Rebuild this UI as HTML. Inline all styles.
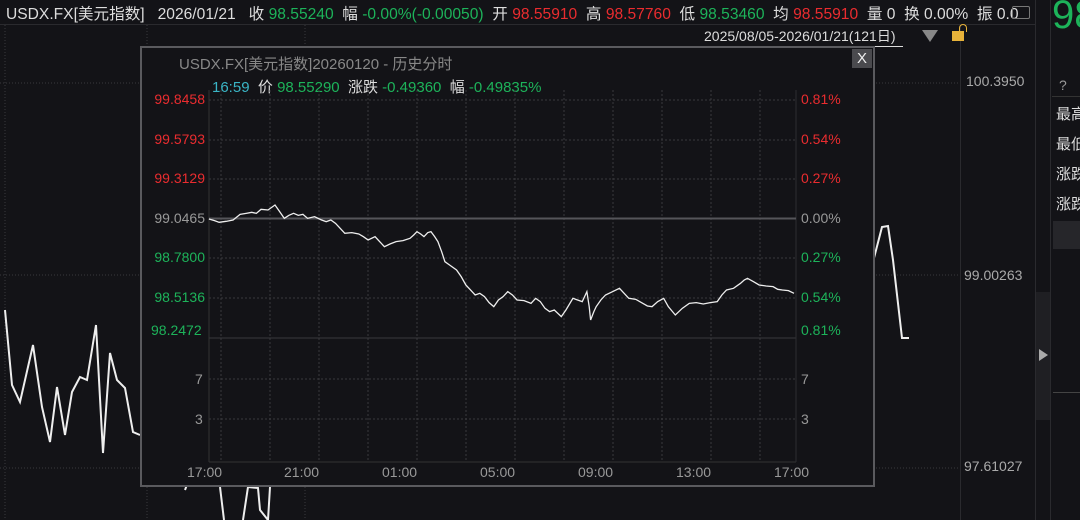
<!DOCTYPE html><html><head><meta charset="utf-8"><style>
body{margin:0;width:1080px;height:520px;background:#131317;overflow:hidden;position:relative;font-family:"Liberation Sans","Noto Sans CJK SC",sans-serif;color:#ccc}
.a{position:absolute;white-space:nowrap}
.r{color:#ea2c2f}.g{color:#1db35a}.w{color:#ddd}.gy{color:#999}
.t{font-size:15.6px;top:2px;width:1028px;overflow:hidden}
.ax{font-size:14px;color:#aaa}
</style></head><body>
<div class="a" style="left:0;top:0;width:1035px;height:24px;border-bottom:1px solid #2a2a2e"></div>
<div class="a t w" style="left:6px">USDX.FX[美元指数] &nbsp; 2026/01/21 &nbsp; 收 <span class="g">98.55240</span> &nbsp;幅 <span class="g">-0.00%(-0.00050)</span> &nbsp;开 <span class="r">98.55910</span> &nbsp;高 <span class="r">98.57760</span> &nbsp;低 <span class="g">98.53460</span> &nbsp;均 <span class="r">98.55910</span> &nbsp;量 0 &nbsp;换 0.00% &nbsp;振 0.0</div>
<div class="a" style="left:1012px;top:6px;width:16px;height:11px;border:1.5px solid #777;border-radius:2px"></div>
<div class="a" style="left:1035px;top:0;width:1px;height:520px;background:#2a2a2e"></div>
<div class="a" style="left:1050px;top:0;width:1px;height:520px;background:#2a2a2e"></div>
<div class="a g" style="left:1052px;top:-7px;font-size:40px">98</div>
<div class="a gy" style="left:1059px;top:77px;font-size:14px">?</div>
<div class="a" style="left:1052px;top:96px;width:28px;height:1px;background:#333"></div>
<div class="a w" style="left:1056px;top:100px;font-size:15px;line-height:30px">最高<br>最低<br>涨跌<br>涨跌</div>
<div class="a" style="left:1053px;top:221px;width:27px;height:28px;background:#26262a"></div>
<div class="a" style="left:1053px;top:392px;width:27px;height:1px;background:#444"></div>
<div class="a" style="left:1036px;top:292px;width:14px;height:128px;background:#1f1f23"></div>
<div class="a" style="left:1039px;top:349px;width:0;height:0;border-left:9px solid #aaa;border-top:6px solid transparent;border-bottom:6px solid transparent"></div>
<div class="a" style="left:960px;top:25px;width:1px;height:495px;background:#2a2a2e"></div>
<div class="a w" style="left:704px;top:26px;font-size:14px;border-bottom:1px solid #ddd;padding-right:8px">2025/08/05-2026/01/21(121日)</div>
<div class="a" style="left:922px;top:30px;border-top:12px solid #888;border-left:8px solid transparent;border-right:8px solid transparent"></div>
<div class="a" style="left:952px;top:31px;width:12px;height:10px;background:#e8b33a"></div>
<div class="a" style="left:959px;top:24px;width:6px;height:7px;border:1.5px solid #e8b33a;border-bottom:none;border-radius:4px 4px 0 0"></div>
<div class="a ax" style="left:966px;top:73px">100.3950</div>
<div class="a ax" style="left:964px;top:267px">99.00263</div>
<div class="a ax" style="left:964px;top:458px">97.61027</div>
<svg class="a" style="left:0;top:0" width="1080" height="520">
<g stroke="#3a3a3e" stroke-dasharray="1,2">
<line x1="0" y1="83" x2="960" y2="83"/><line x1="0" y1="275" x2="960" y2="275"/><line x1="0" y1="468" x2="960" y2="468"/>
<line x1="5" y1="25" x2="5" y2="520"/><line x1="147" y1="25" x2="147" y2="520"/><line x1="305" y1="25" x2="305" y2="520"/>
</g>
<polyline fill="none" stroke="#eee" stroke-width="2" points="5,310 12,385 20,402 33,345 42,407 50,442 57,387 65,435 72,392 80,377 87,380 96,325 103,453 110,353 117,380 125,388 133,432 140,435"/>
<polyline fill="none" stroke="#eee" stroke-width="2" points="185,490 188,482"/>
<polyline fill="none" stroke="#eee" stroke-width="2" points="220,487 224,520"/>
<polyline fill="none" stroke="#eee" stroke-width="2" points="243,520 248,487 258,488 260,510 268,520 270,487"/>
<polyline fill="none" stroke="#eee" stroke-width="2" points="874,258 882,227 888,226 893,260 902,338 909,338"/>
</svg>
<div class="a" style="left:140px;top:46px;width:731px;height:437px;border:2px solid #5a5a5e;background:#131317"></div>
<div class="a" style="left:852px;top:49px;width:20px;height:19px;background:#4a4a4e;color:#eee;font-size:15px;text-align:center;line-height:19px">X</div>
<div class="a" style="left:179px;top:53px;font-size:15px;color:#888">USDX.FX[美元指数]20260120 - 历史分时</div>
<div class="a w" style="left:212px;top:76px;font-size:15px"><span style="color:#3ab5c6">16:59</span> &nbsp;价 <span class="g">98.55290</span> &nbsp;涨跌 <span class="g">-0.49360</span> &nbsp;幅 <span class="g">-0.49835%</span></div>
<svg class="a" style="left:0;top:0" width="1080" height="520">
<g stroke="#3a3a3e" stroke-dasharray="2,2">
<line x1="209" y1="100" x2="796" y2="100"/><line x1="209" y1="140" x2="796" y2="140"/><line x1="209" y1="179" x2="796" y2="179"/><line x1="209" y1="258" x2="796" y2="258"/><line x1="209" y1="298" x2="796" y2="298"/><line x1="209" y1="379" x2="796" y2="379"/><line x1="209" y1="419" x2="796" y2="419"/>
<line x1="221" y1="90" x2="221" y2="462"/><line x1="270" y1="90" x2="270" y2="462"/><line x1="319" y1="90" x2="319" y2="462"/><line x1="368" y1="90" x2="368" y2="462"/><line x1="417" y1="90" x2="417" y2="462"/><line x1="466" y1="90" x2="466" y2="462"/><line x1="515" y1="90" x2="515" y2="462"/><line x1="564" y1="90" x2="564" y2="462"/><line x1="613" y1="90" x2="613" y2="462"/><line x1="662" y1="90" x2="662" y2="462"/><line x1="711" y1="90" x2="711" y2="462"/><line x1="760" y1="90" x2="760" y2="462"/>
</g>
<line x1="209" y1="338" x2="796" y2="338" stroke="#3a3a3e"/>
<line x1="209" y1="90" x2="209" y2="462" stroke="#333"/>
<line x1="209" y1="462" x2="796" y2="462" stroke="#333"/>
<line x1="796" y1="90" x2="796" y2="462" stroke="#2c2c30"/>
<line x1="209" y1="218.5" x2="796" y2="218.5" stroke="#55555a" stroke-width="2"/>
<g transform="translate(140,180) scale(0.4655,0.3333)"><polyline fill="none" stroke="#eee" stroke-width="1.3" vector-effect="non-scaling-stroke" points="148,117 160,122 170,127 185,124 200,120 215,103 228,100 240,97 250,100 260,88 275,90 290,75 300,95 310,115 320,106 330,100 340,106 350,103 360,115 375,110 390,120 400,125 410,120 420,130 430,145 440,160 455,158 470,162 480,170 490,180 505,170 515,185 525,200 537,192 550,185 565,182 580,175 588,165 595,155 603,162 610,170 618,158 625,155 633,170 640,185 648,215 655,245 665,255 680,270 690,290 700,315 710,330 720,345 730,340 740,350 750,368 760,380 770,360 780,350 790,335 800,345 810,360 825,362 840,370 850,355 860,365 870,385 880,395 890,390 905,410 915,390 930,355 940,360 950,365 960,335 965,380 968,420 975,395 980,380 990,360 1000,345 1015,335 1030,325 1040,340 1050,355 1065,358 1080,370 1090,378 1100,380 1112,365 1125,355 1135,380 1150,405 1165,385 1180,370 1195,368 1210,372 1225,368 1240,365 1250,345 1260,330 1275,325 1290,310 1298,300 1305,295 1318,305 1330,315 1345,318 1360,320 1370,328 1380,330 1393,332 1405,340"/></g>
</svg>
<div class="a" style="font-size:14px;left:151px;top:80px;line-height:39.5px;text-align:right;width:54px"><span class="r">99.8458</span><br><span class="r">99.5793</span><br><span class="r">99.3129</span><br><span class="gy">99.0465</span><br><span class="g">98.7800</span><br><span class="g">98.5136</span></div>
<div class="a g" style="font-size:14px;left:151px;top:322px">98.2472</div>
<div class="a gy" style="font-size:14px;left:195px;top:371px">7</div>
<div class="a gy" style="font-size:14px;left:195px;top:411px">3</div>
<div class="a" style="font-size:14px;left:801px;top:80px;line-height:39.5px"><span class="r">0.81%</span><br><span class="r">0.54%</span><br><span class="r">0.27%</span><br><span class="gy">0.00%</span><br><span class="g">0.27%</span><br><span class="g">0.54%</span></div>
<div class="a g" style="font-size:14px;left:801px;top:322px">0.81%</div>
<div class="a gy" style="font-size:14px;left:801px;top:371px">7</div>
<div class="a gy" style="font-size:14px;left:801px;top:411px">3</div>
<div class="a gy" style="font-size:14px;top:464px;left:187px">17:00</div>
<div class="a gy" style="font-size:14px;top:464px;left:284px">21:00</div>
<div class="a gy" style="font-size:14px;top:464px;left:382px">01:00</div>
<div class="a gy" style="font-size:14px;top:464px;left:480px">05:00</div>
<div class="a gy" style="font-size:14px;top:464px;left:578px">09:00</div>
<div class="a gy" style="font-size:14px;top:464px;left:676px">13:00</div>
<div class="a gy" style="font-size:14px;top:464px;left:774px">17:00</div>
</body></html>
